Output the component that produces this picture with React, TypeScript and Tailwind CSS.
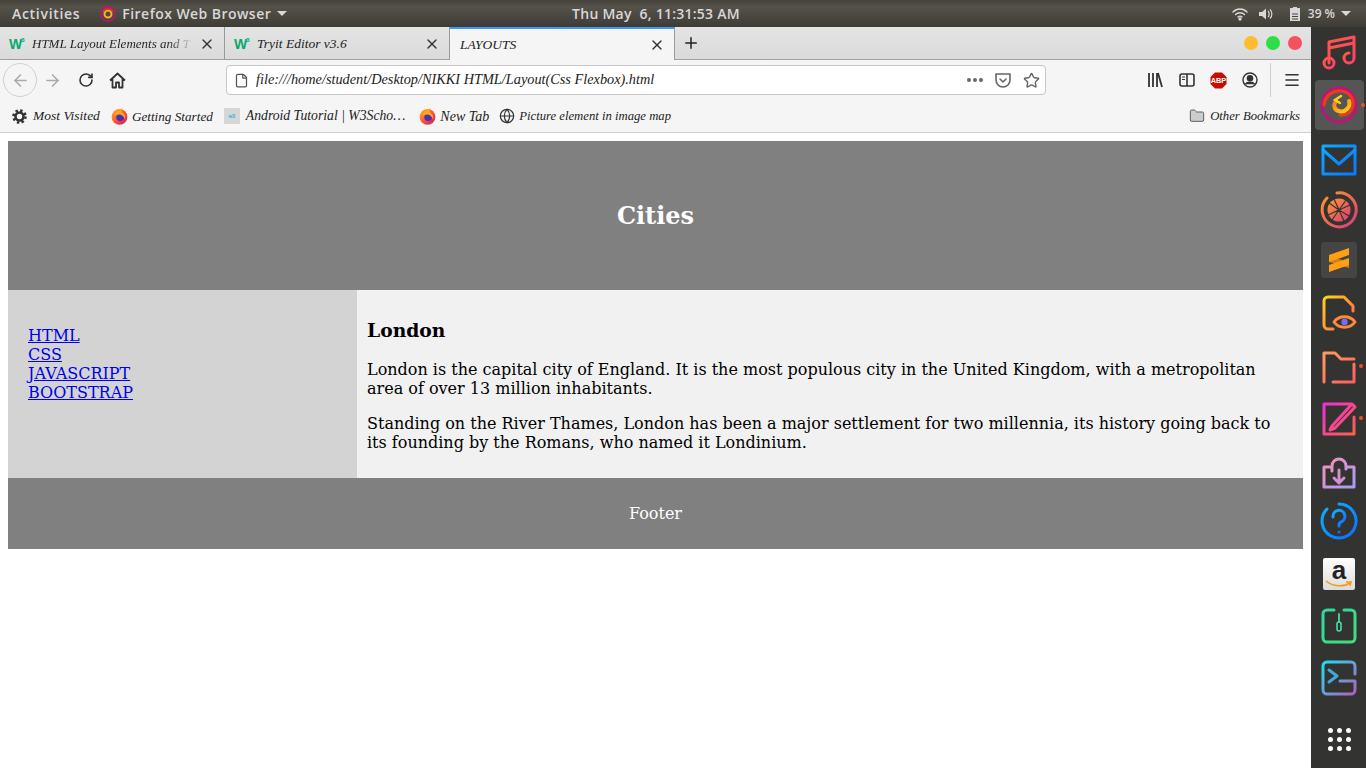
import React from 'react';
import { X, Plus, ArrowLeft, ArrowRight, RotateCw, File, Globe, Star, Menu, Folder } from 'lucide-react';

const chancery = "font-['Liberation_Serif',serif] italic";

function W3Logo() {
 return (
  <span className="w-[16px] flex items-start shrink-0 font-['Liberation_Sans',sans-serif] font-bold not-italic text-[#04aa6d] leading-none">
   <span className="text-[14px] tracking-[-1px]">W</span>
   <span className="text-[6px]">3</span>
  </span>
 );
}

function FirefoxLogo() {
 return (
  <svg width="17" height="17" viewBox="0 0 16 16" className="shrink-0">
   <defs>
    <linearGradient id="ffx" x1="0" y1="0" x2="1" y2="1">
     <stop offset="0" stopColor="#ffbd1f" />
     <stop offset="0.5" stopColor="#ff5634" />
     <stop offset="1" stopColor="#c4126f" />
    </linearGradient>
   </defs>
   <circle cx="8" cy="8.4" r="7.4" fill="url(#ffx)" />
   <circle cx="8.6" cy="8.8" r="3.6" fill="#4a2fb0" />
   <path d="M3 7 C4 3.5 8 1 11 0.5 C9.5 2.5 9.6 3.6 10.8 4.4 C13 5.5 14 8 13.2 10.5 C12.5 8 10 6 7.6 6 C5.6 6 4.5 7 3 7Z" fill="#ffa51f" />
  </svg>
 );
}

function Tab({ children, active, fade }: { children: React.ReactNode; active?: boolean; fade?: boolean }) {
 return (
  <div className={`w-[225px] h-full flex items-center pl-[9px] pr-[9px] gap-[7px] border-r border-[#9a9a9a] ${active ? 'bg-[#f5f5f5] border-t-[2px] border-t-[#3d9bf0] pt-[1px]' : 'pt-[2px] border-b border-b-[#a0a0a0]'}`}>
   {!active && <W3Logo />}
   <span className={`${chancery} flex-1 whitespace-nowrap ${fade ? 'text-[13px] bg-linear-to-r from-[#222] from-[85%] to-[#dedede] bg-clip-text text-transparent' : 'text-[13.5px] text-[#222]'} ${active ? 'pl-[1px]' : ''}`}>
    {children}
   </span>
   <X size={16} strokeWidth={2} className="text-[#333] shrink-0" />
  </div>
 );
}

function Bookmark({ icon, label, className, textClass }: { icon: React.ReactNode; label: string; className?: string; textClass: string }) {
 return (
  <div className={`flex items-center gap-[4px] ${className ?? ''}`}>
   {icon}
   <span className={`${chancery} ${textClass} text-[#222] whitespace-nowrap`}>{label}</span>
  </div>
 );
}

function Gradient({ id, from, to, via }: { id: string; from: string; to: string; via?: string }) {
 return (
  <defs>
   <linearGradient id={id} x1="0" y1="0" x2="1" y2="1">
    <stop offset="0" stopColor={from} />
    {via && <stop offset="0.5" stopColor={via} />}
    <stop offset="1" stopColor={to} />
   </linearGradient>
  </defs>
 );
}

function DockIcon({ className, dot, children }: { className: string; dot?: boolean; children: React.ReactNode }) {
 return (
  <div className={`relative w-[40px] h-[40px] shrink-0 ${className}`}>
   <svg width="40" height="40" viewBox="0 0 40 40" fill="none" strokeWidth="3" strokeLinecap="round" strokeLinejoin="round">
    {children}
   </svg>
   {dot && <span className="absolute right-[-4px] top-[17px] w-[4px] h-[4px] rounded-full bg-[#f0501e]" />}
  </div>
 );
}

function Dock() {
 return (
  <aside className="w-[55px] shrink-0 bg-[#333331] flex flex-col items-center pl-[1px]">
   <DockIcon className="mt-[5px]">
    <Gradient id="d1" from="#ff5a45" to="#ff3d6e" />
    <path d="M10 31 V10 L35 5 V25 M10 16 L35 11" stroke="url(#d1)" />
    <circle cx="10" cy="31" r="5" stroke="url(#d1)" />
    <path d="M35 26 A5 5 0 1 1 30 21" stroke="url(#d1)" />
   </DockIcon>
   <div className="mt-[8px] w-[49px] h-[50px] rounded-[4px] bg-[#555553] flex items-center justify-center shrink-0">
    <div className="relative w-[40px] h-[40px]">
     <svg width="40" height="40" viewBox="0 0 40 40" fill="none" strokeLinecap="round">
      <Gradient id="d2" from="#ff7a1a" to="#ffd21a" />
      <circle cx="20" cy="20" r="17" stroke="#c0127a" strokeWidth="2.8" />
      <path d="M5 20 C6 10 15 5 22 6 C30 7 35 13 34 20 C33 27 27 31 21 30" stroke="#ee3a1c" strokeWidth="3.2" />
      <path d="M30 16 C32 22 26 28 20 26 C15 25 14 20 17 16" stroke="url(#d2)" strokeWidth="4" />
      <path d="M22 11 L16 15 L21 18" stroke="#ffd21a" strokeWidth="2.4" />
     </svg>
     <span className="absolute right-[-6px] top-[18px] w-[4px] h-[4px] rounded-full bg-[#f0501e]" />
    </div>
   </div>
   <DockIcon className="mt-[10px]">
    <Gradient id="d3" from="#0fa8ff" to="#0a78ff" />
    <path d="M4 6 H36 V34 H4 Z" stroke="url(#d3)" />
    <path d="M4 10 L20 24 L36 10" stroke="url(#d3)" />
   </DockIcon>
   <DockIcon className="mt-[10px]">
    <Gradient id="d4" from="#ff9a2e" to="#d83a7c" />
    <path d="M8 8 A17 17 0 1 0 18 3" stroke="url(#d4)" />
    <circle cx="20" cy="20" r="11.5" fill="url(#d4)" />
    <path d="M15 9 L20 20 M31 15 L20 20 M25 31 L20 20 M9 25 L20 20 M27 10 L20 20 M30 26 L20 20 M13 30 L20 20 M10 13 L20 20" stroke="#333331" strokeWidth="1.2" />
   </DockIcon>
   <div className="mt-[12px] w-[36px] h-[36px] rounded-[3px] bg-[#454543] flex items-center justify-center shrink-0 mb-[2px]">
    <svg width="22" height="26" viewBox="0 0 22 26">
     <path d="M1 9 L21 15 V21 L1 15 Z" fill="#d97a0c" />
     <path d="M1 8 L21 1 V8 L1 15 Z" fill="#ff9f14" />
     <path d="M1 18 L21 11 V18 L1 25 Z" fill="#ff9f14" />
    </svg>
   </div>
   <DockIcon className="mt-[14px]">
    <Gradient id="d6" from="#ffd21f" to="#ff5f4a" />
    <path d="M34 17 V12 L25 3 H9 A4 4 0 0 0 5 7 V31 A4 4 0 0 0 9 35 H14" stroke="url(#d6)" />
    <path d="M15 28 C20 21 31 21 36 28 C31 35 20 35 15 28 Z" stroke="#ff8a3c" />
    <circle cx="25.5" cy="28" r="3.2" fill="#7a6cf0" />
   </DockIcon>
   <DockIcon className="mt-[13px]" dot>
    <Gradient id="d7" from="#ff9a62" to="#ff5f5f" />
    <path d="M5 35 V6 H16 L22 12 H35 M35 17 V35 H14" stroke="url(#d7)" />
   </DockIcon>
   <DockIcon className="mt-[12px]" dot>
    <Gradient id="d8" from="#ee2fd8" to="#ff5f4a" />
    <path d="M32 5 H5 V35 H35 V18" stroke="url(#d8)" />
    <path d="M13 27 L33 5 L36 8 L16 29 L11 31 Z" stroke="url(#d8)" />
   </DockIcon>
   <DockIcon className="mt-[16px]">
    <Gradient id="d9" from="#f58fb8" to="#a99cf5" />
    <path d="M12 12 H5 V32 H35 V12 H28 M13 16 V11 A7 7 0 0 1 27 11 V14" stroke="url(#d9)" />
    <path d="M20 15 V27 M15 23 L20 28 L25 23" stroke="#d28fd0" />
   </DockIcon>
   <DockIcon className="mt-[6px]">
    <Gradient id="d10" from="#0fb4ff" to="#0a70ff" />
    <path d="M8 8 A17 17 0 1 0 20 3" stroke="url(#d10)" />
    <path d="M14 16 A6 6 0 1 1 22 21 C20 22 20 23 20 25" stroke="url(#d10)" strokeWidth="3" />
    <circle cx="20" cy="31" r="1.6" fill="#0a70ff" />
   </DockIcon>
   <div className="mt-[17px] w-[32px] h-[32px] rounded-[2px] bg-linear-to-b from-white to-[#dcdcdc] flex flex-col items-center shrink-0 relative">
    <span className="font-['Liberation_Sans',sans-serif] font-bold text-[26px] leading-[24px] text-[#222]">a</span>
    <svg width="28" height="8" viewBox="0 0 28 8" fill="none" className="absolute bottom-[2px] left-[2px]">
     <path d="M1 1 C8 7 19 7 25 3 M21 2 L26 2 L25 6" stroke="#f8991c" strokeWidth="1.6" />
    </svg>
   </div>
   <DockIcon className="mt-[16px]">
    <Gradient id="d12" from="#2fd8a0" to="#3fe07a" />
    <path d="M15 4 H8 A4 4 0 0 0 4 8 V32 A4 4 0 0 0 8 36 H32 A4 4 0 0 0 36 32 V8 A4 4 0 0 0 32 4 H25" stroke="url(#d12)" />
    <path d="M20 8 V16" stroke="#3fe0a0" strokeWidth="1.8" />
    <rect x="18" y="16" width="4" height="9" rx="2" stroke="#3fe0a0" strokeWidth="1.6" />
   </DockIcon>
   <DockIcon className="mt-[12px]">
    <Gradient id="d13" from="#1ce0f0" to="#b060c0" />
    <path d="M36 16 V8 A4 4 0 0 0 32 4 H8 A4 4 0 0 0 4 8 V32 A4 4 0 0 0 8 36 H32 A4 4 0 0 0 36 32 V23 H21" stroke="url(#d13)" />
    <path d="M10 12 L18 18 L10 24" stroke="#40a8e0" />
   </DockIcon>
   <div className="mt-[30px] grid grid-cols-3 gap-[4px]">
    {Array.from({ length: 9 }).map((_, i) => (
     <span key={i} className="w-[5px] h-[5px] rounded-full bg-white" />
    ))}
   </div>
  </aside>
 );
}

function Browser() {
 return (
  <div className="flex-1 min-w-0 flex flex-col bg-white">
   <div className="h-[33px] flex bg-linear-to-b from-[#e4e4e4] to-[#dadada]">
    <Tab fade>HTML Layout Elements and T</Tab>
    <Tab>Tryit Editor v3.6</Tab>
    <Tab active>LAYOUTS</Tab>
    <div className="flex-1 flex items-center border-b border-[#a0a0a0] pl-[7px] pr-[9px]">
     <Plus size={18} strokeWidth={2} className="text-[#222]" />
     <div className="ml-auto flex items-center gap-[8px]">
      <span className="w-[14px] h-[14px] rounded-full bg-[#fdbd2e]" />
      <span className="w-[14px] h-[14px] rounded-full bg-[#2ede44]" />
      <span className="w-[14px] h-[14px] rounded-full bg-[#f5515f]" />
     </div>
    </div>
   </div>

   <div className="h-[40px] bg-[#f5f5f5] flex items-center pl-[3px]">
    <div className="w-[34px] h-[34px] rounded-full border border-[#d0d0d0] flex items-center justify-center">
     <ArrowLeft size={19} className="text-[#aaa]" />
    </div>
    <ArrowRight size={19} className="text-[#aaa] ml-[6px]" />
    <RotateCw size={16} strokeWidth={2.4} className="text-[#333] ml-[16px]" />
    <svg width="17" height="17" viewBox="0 0 17 17" fill="none" stroke="#333" strokeWidth="1.8" strokeLinejoin="round" className="ml-[15px]">
     <path d="M1 8.5 L8.5 1.5 L16 8.5 M3.5 7 V15.5 H7 V10.5 H10 V15.5 H13.5 V7" />
    </svg>
    <div className="ml-[100px] w-[820px] shrink-0 h-[30px] bg-white rounded-[4px] border border-[#c8c8c8] flex items-center pl-[7px] pr-[5px]">
     <File size={15} className="text-[#555]" />
     <span className={`${chancery} ml-[7px] text-[14.3px] text-[#222] whitespace-nowrap`}>file:///home/student/Desktop/NIKKI HTML/Layout(Css Flexbox).html</span>
     <span className="ml-auto flex gap-[2px]">
      <span className="w-[4px] h-[4px] rounded-full bg-[#666]" />
      <span className="w-[4px] h-[4px] rounded-full bg-[#666]" />
      <span className="w-[4px] h-[4px] rounded-full bg-[#666]" />
     </span>
     <svg width="16" height="15" viewBox="0 0 16 15" fill="none" className="ml-[12px]" stroke="#666" strokeWidth="1.6" strokeLinecap="round" strokeLinejoin="round">
      <path d="M1 1 H15 V7 A7 7 0 0 1 1 7 Z" />
      <path d="M5 6 L8 9 L11 6" />
     </svg>
     <Star size={17} strokeWidth={2} className="text-[#666] ml-[12px]" />
    </div>
    <svg width="16" height="16" viewBox="0 0 16 16" fill="none" stroke="#333" strokeWidth="1.8" className="ml-[101px] shrink-0">
     <path d="M2 1 V15 M6 1 V15 M10 1 V15 M11 1 L15 15" />
    </svg>
    <svg width="16" height="14" viewBox="0 0 16 14" fill="none" stroke="#333" strokeWidth="1.6" className="ml-[16px] shrink-0">
     <rect x="1" y="1" width="14" height="12" rx="2" />
     <path d="M8 1 V13" />
     <path d="M3 4 H6 M3 6.5 H6" strokeWidth="1.2" />
    </svg>
    <svg width="17" height="17" viewBox="0 0 17 17" className="ml-[15px] shrink-0">
     <path d="M5 0.5 H12 L16.5 5 V12 L12 16.5 H5 L0.5 12 V5 Z" fill="#c70d00" />
     <text x="8.5" y="11.2" textAnchor="middle" fontSize="7.4" fontWeight="700" fill="#fff" fontFamily="Liberation Sans, sans-serif">ABP</text>
    </svg>
    <svg width="16" height="16" viewBox="0 0 16 16" fill="none" stroke="#333" strokeWidth="1.4" className="ml-[15px] shrink-0">
     <circle cx="8" cy="8" r="7" />
     <circle cx="8" cy="6.2" r="2.6" fill="#333" />
     <path d="M3.4 12.2 C5 9.6 11 9.6 12.6 12.2" fill="#333" />
    </svg>
    <span className="ml-[12px] w-px h-[34px] bg-[#cfcfcf] shrink-0" />
    <Menu size={18} strokeWidth={2.2} className="text-[#333] ml-[12px] shrink-0" />
   </div>

   <div className="h-[33px] bg-[#f5f5f5] border-b border-[#cfcfcf] flex items-center pt-[1px] pl-[12px] pr-[11px]">
    <Bookmark
     textClass="text-[13.5px]"
     icon={
      <svg width="15" height="15" viewBox="0 0 15 15" fill="none" stroke="#333" className="mr-[2px]">
       <circle cx="7.5" cy="7.5" r="4" strokeWidth="2.6" />
       <circle cx="7.5" cy="7.5" r="6" strokeWidth="2.6" strokeDasharray="2.4 2.3" />
      </svg>
     }
     label="Most Visited"
    />
    <Bookmark className="ml-[11px]" textClass="text-[13.2px]" icon={<FirefoxLogo />} label="Getting Started" />
    <Bookmark
     className="ml-[11px]"
     textClass="text-[13.7px]"
     icon={
      <span className="w-[16px] h-[16px] bg-[#d6d6d6] flex items-center justify-center font-['Liberation_Sans',sans-serif] text-[5px] font-bold text-[#3ab0d8] mr-[2px]">
       w3
      </span>
     }
     label="Android Tutorial | W3Scho…"
    />
    <Bookmark className="ml-[14px]" textClass="text-[14px]" icon={<FirefoxLogo />} label="New Tab" />
    <Bookmark className="ml-[10px]" textClass="text-[12.7px]" icon={<Globe size={16} strokeWidth={1.8} className="text-[#333]" />} label="Picture element in image map" />
    <Bookmark className="ml-auto" textClass="text-[12.7px]" icon={<Folder size={16} fill="#ccc" strokeWidth={1.4} className="text-[#555] mr-[1px]" />} label="Other Bookmarks" />
   </div>

   <main className="flex-1 p-[8px] font-['DejaVu_Serif',serif] text-[16px] leading-[19px] text-black">
    <header className="h-[149px] bg-[#808080] flex items-center justify-center text-white text-[24px] font-bold">Cities</header>
    <section className="flex h-[188px]">
     <nav className="w-[349px] bg-[#d3d3d3] pt-[36px] px-[20px]">
      <ul>
       {['HTML', 'CSS', 'JAVASCRIPT', 'BOOTSTRAP'].map(item => (
        <li key={item}>
         <a href="#" className="text-[#0000ee] underline">{item}</a>
        </li>
       ))}
      </ul>
     </nav>
     <article className="flex-1 bg-[#f1f1f1] px-[10px] pt-[29px]">
      <h3 className="text-[18.72px] leading-[22px] font-bold">London</h3>
      <p className="mt-[19px]">London is the capital city of England. It is the most populous city in the United Kingdom, with a metropolitan area of over 13 million inhabitants.</p>
      <p className="mt-[16px]">Standing on the River Thames, London has been a major settlement for two millennia, its history going back to its founding by the Romans, who named it Londinium.</p>
     </article>
    </section>
    <footer className="h-[71px] bg-[#808080] flex items-center justify-center text-white">Footer</footer>
   </main>
  </div>
 );
}

export default function App() {
 return (
  <div className="w-[1366px] h-[768px] overflow-hidden flex flex-col">
   <div className="h-[27px] shrink-0 bg-linear-to-b from-[#45423c] via-[#55524a] via-[25%] to-[#3f3c37] flex items-center pl-[12px] pr-[15px] relative font-['Open_Sans',sans-serif] font-semibold text-[14px] text-[#d8d8d8]">
    <span className="tracking-[0.7px]">Activities</span>
    <svg width="16" height="16" viewBox="0 0 16 16" fill="none" className="ml-[20px]">
     <circle cx="8" cy="8" r="7" stroke="#c0127a" strokeWidth="1.4" />
     <circle cx="8" cy="8" r="3.5" stroke="#ffb31a" strokeWidth="2" />
     <path d="M3 6 C5 2 11 2 13 6" stroke="#e8311f" strokeWidth="1.6" />
    </svg>
    <span className="ml-[6px] tracking-[0.45px]">Firefox Web Browser</span>
    <span className="ml-[6px] w-0 h-0 border-x-[5px] border-x-transparent border-t-[5px] border-t-[#d8d8d8]" />
    <span className="absolute left-0 right-[54px] text-center pointer-events-none tracking-[0.25px] whitespace-pre">Thu May  6, 11:31:53 AM</span>
    <div className="ml-auto flex items-center">
     <svg width="16" height="14" viewBox="0 0 16 14" fill="none" stroke="#d8d8d8" strokeWidth="1.4" strokeLinecap="round">
      <path d="M1 5 C5 1 11 1 15 5 M3.5 7.5 C6 5.2 10 5.2 12.5 7.5 M6 10 C7 9 9 9 10 10" />
      <circle cx="8" cy="12" r="1" fill="#d8d8d8" />
     </svg>
     <svg width="16" height="14" viewBox="0 0 16 14" fill="none" className="ml-[10px]">
      <path d="M1 5 H4 L8 1.5 V12.5 L4 9 H1 Z" fill="#d8d8d8" />
      <path d="M10 4 C11.5 5.5 11.5 8.5 10 10 M12 2.5 C14.5 5 14.5 9 12 11.5" stroke="#d8d8d8" strokeWidth="1.2" />
     </svg>
     <svg width="12" height="16" viewBox="0 0 12 16" fill="none" className="ml-[15px]">
      <path d="M4 1 H8 V2 H11 V15 H1 V2 H4 Z" fill="#d8d8d8" />
      <path d="M3 8 H9 M3 10.5 H9 M3 13 H9" stroke="#47443e" strokeWidth="1" />
     </svg>
     <span className="ml-[7px] text-[12px]">39 %</span>
     <span className="ml-[6px] w-0 h-0 border-x-[5px] border-x-transparent border-t-[5px] border-t-[#d8d8d8]" />
    </div>
   </div>
   <div className="flex-1 min-h-0 flex">
    <Browser />
    <Dock />
   </div>
  </div>
 );
}
